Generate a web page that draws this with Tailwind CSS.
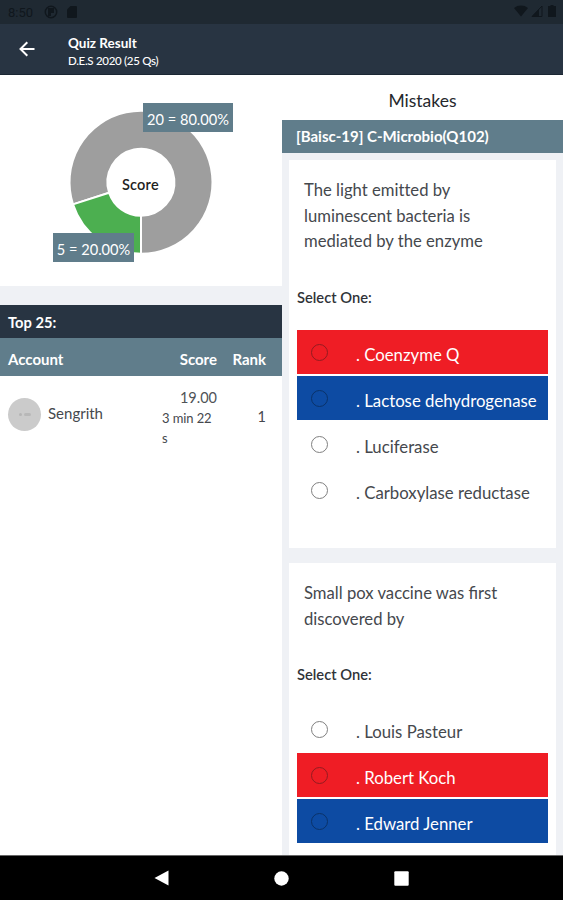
<!DOCTYPE html>
<html lang="en">
<head>
    <meta charset="UTF-8">
    <meta name="viewport" content="width=device-width, initial-scale=1.0">
    <title>Quiz Result</title>
    <script src="https://cdn.jsdelivr.net/npm/@tailwindcss/browser@4"></script>
</head>
<body class="h-[900px] w-[563px] overflow-hidden flex flex-col bg-[#eff1f5] font-[Lato,sans-serif] text-[#45484d]">
    <!-- Status Bar -->
    <div class="h-6 shrink-0 bg-[#1f2932] flex items-center pl-2 pr-[7px] text-[#10171d]">
        <span class="w-[27px] text-[13px] font-[Roboto,sans-serif] leading-none">8:50</span>
        <svg class="w-3.5 h-3.5 ml-[9px]" viewBox="0 0 14 14">
            <circle cx="7" cy="7" r="5.7" fill="none" stroke="currentColor" stroke-width="1.5"/>
            <path d="M4 3h6v5H7v3H4z" fill="currentColor"/>
        </svg>
        <svg class="w-3 h-3.5 ml-2" viewBox="0 0 12 14" fill="currentColor">
            <path d="M4.500 1H10a1 1 0 0 1 1 1v10a1 1 0 0 1-1 1H2a1 1 0 0 1-1-1V4.500z"/>
        </svg>
        <svg class="w-3.5 h-3 ml-auto -mt-0.5" viewBox="0 0 14 12" fill="currentColor">
            <path d="M0 3C4-.3 10-.3 14 3L7 11.500z"/>
        </svg>
        <svg class="w-3 h-3 ml-[3px] -mt-0.5" viewBox="0 0 12 12">
            <path d="M1 11.500L11 1v10.500z" fill="none" stroke="currentColor"/>
            <path d="M1 11.500L8 4.200v7.300z" fill="currentColor"/>
        </svg>
        <svg class="w-2 h-3 ml-[5px] -mt-0.5" viewBox="0 0 8 12" fill="currentColor">
            <path d="M2.500 0h3v1H8v11H0V1h2.500z"/>
        </svg>
    </div>

    <!-- App Bar -->
    <header class="h-[51px] shrink-0 bg-[#283442] border-b border-[#1b2733] flex items-center text-white">
        <svg class="w-4 h-4 ml-[19px] -mt-px" viewBox="0 0 16 16" fill="none" stroke="currentColor" stroke-width="2">
            <path d="M15.500 8H2M8.300 1.200L1.500 8l6.800 6.800"/>
        </svg>
        <div class="ml-[33px] mt-1.5">
            <h1 class="text-[13.500px] leading-[18px] font-bold">Quiz Result</h1>
            <p class="text-[11.500px] leading-[18px] font-medium tracking-[-0.3px]">D.E.S 2020 (25 Qs)</p>
        </div>
    </header>

    <main class="flex flex-1 min-h-0">
        <!-- Left Column: Score and Ranking -->
        <section class="w-[282px] shrink-0 flex flex-col">
            <div class="relative h-[211px] shrink-0 bg-white">
                <svg class="w-[282px] h-[211px]" viewBox="0 0 282 211">
                    <g transform="translate(141 107.300)" stroke="#fff" stroke-width="2">
                        <path fill="#9e9e9e" d="M0 71.500A71.500 71.500 0 1 0-68 22.100L-31.900 10.400A33.500 33.500 0 1 1 0 33.500z"/>
                        <path fill="#4caf50" d="M0 71.500A71.500 71.500 0 0 1-68 22.100L-31.900 10.400A33.500 33.500 0 0 0 0 33.500z"/>
                    </g>
                </svg>
                <span class="absolute left-[122px] top-[101px] text-[14.500px] leading-[18px] font-semibold tracking-[0.2px] text-[#222]">Score</span>
                <span class="absolute left-[143px] top-[28px] w-[90px] h-[29px] pt-[3px] text-center text-[14.600px] leading-7 text-white bg-[#607d8b]">20 = 80.00%</span>
                <span class="absolute left-[53px] top-[158px] w-[81px] h-[29px] pt-[3px] text-center text-[14.600px] leading-7 text-white bg-[#607d8b]">5 = 20.00%</span>
            </div>
            <div class="mt-[19px] h-[33px] shrink-0 bg-[#283442] pl-2 pt-0.5 text-[14.700px] leading-[31px] font-bold text-white">Top 25:</div>
            <div class="h-[38px] shrink-0 bg-[#607d8b] pt-[3px] flex text-[15px] leading-9 font-bold text-white">
                <span class="pl-2">Account</span>
                <span class="ml-auto">Score</span>
                <span class="w-[49px] mr-[16px] text-right">Rank</span>
            </div>
            <div class="flex-1 bg-white">
                <div class="flex items-center h-[76px] pl-2">
                    <span class="w-[33px] h-[33px] rounded-full bg-[#cbcbcb] flex items-center justify-center gap-0.5">
                        <i class="w-[3px] h-[3px] rounded-full bg-[#b5b5b5]"></i>
                        <i class="w-[7px] h-[3px] rounded-full bg-[#b8b8b8]"></i>
                    </span>
                    <span class="ml-[7px] -mt-0.5 text-[15px]">Sengrith</span>
                    <div class="ml-auto w-[55px] mt-2 leading-5">
                        <div class="text-right text-[14.500px] text-[#505357]">19.00</div>
                        <div class="w-[53px] text-[13px] tracking-[-0.1px]">3 min 22 s</div>
                    </div>
                    <span class="w-[49px] mr-[16px] mt-1.5 text-right text-[14.500px]">1</span>
                </div>
            </div>
        </section>

        <!-- Right Column: Mistakes -->
        <section class="flex-1 flex flex-col">
            <h2 class="h-[45px] shrink-0 bg-white pt-1 text-center text-[17.500px] leading-[43px] text-[#25282c]">Mistakes</h2>
            <div class="h-[33px] shrink-0 bg-[#607d8b] pl-[14px] text-[15px] leading-[33px] font-bold text-white">[Baisc-19] C-Microbio(Q102)</div>

            <article class="mt-[7px] ml-[7px] w-[267px] h-[388px] shrink-0 bg-white px-2 pt-[18px]">
                <p class="pl-[7px] text-[16.650px] leading-[25.500px]">The light emit&zwnj;ted by<br>luminescent bacteria is<br>mediated by the enzyme</p>
                <h3 class="mt-[29px] h-[26px] leading-[26px] text-[14.700px] font-semibold text-[#303338]">Select One:</h3>
                <ul class="mt-[20.500px] text-[16.750px]">
                    <li class="h-[44px] mb-[2px] flex items-center bg-[#ef1d25] text-white">
                        <i class="w-[17px] h-[17px] ml-[14px] rounded-full border-[1.500px] border-[#941b20]"></i>
                        <span class="ml-7 pt-1.5">. Coenzyme Q</span>
                    </li>
                    <li class="h-[44px] mb-[2px] flex items-center bg-[#0d4ba3] text-white">
                        <i class="w-[17px] h-[17px] ml-[14px] rounded-full border-[1.500px] border-[#0a3269]"></i>
                        <span class="ml-7 pt-1.5">. Lactose dehydrogenase</span>
                    </li>
                    <li class="h-[44px] mb-[2px] flex items-center">
                        <i class="w-[17px] h-[17px] ml-[14px] rounded-full border-[1.500px] border-[#808080]"></i>
                        <span class="ml-7 pt-1.5">. Luciferase</span>
                    </li>
                    <li class="h-[44px] flex items-center">
                        <i class="w-[17px] h-[17px] ml-[14px] rounded-full border-[1.500px] border-[#808080]"></i>
                        <span class="ml-7 pt-1.5">. Carboxylase reductase</span>
                    </li>
                </ul>
            </article>

            <article class="mt-[15px] ml-[7px] w-[267px] flex-1 bg-white px-2 pt-[18px]">
                <p class="pl-[7px] text-[16.650px] leading-[25.500px]">Small pox vaccine was first<br>discovered by</p>
                <h3 class="mt-[29px] h-[26px] leading-[26px] text-[14.700px] font-semibold text-[#303338]">Select One:</h3>
                <ul class="mt-5 text-[16.750px]">
                    <li class="h-[44px] mb-[2px] flex items-center">
                        <i class="w-[17px] h-[17px] ml-[14px] rounded-full border-[1.500px] border-[#808080]"></i>
                        <span class="ml-7 pt-1.5">. Louis Pasteur</span>
                    </li>
                    <li class="h-[44px] mb-[2px] flex items-center bg-[#ef1d25] text-white">
                        <i class="w-[17px] h-[17px] ml-[14px] rounded-full border-[1.500px] border-[#941b20]"></i>
                        <span class="ml-7 pt-1.5">. Robert Koch</span>
                    </li>
                    <li class="h-[44px] flex items-center bg-[#0d4ba3] text-white">
                        <i class="w-[17px] h-[17px] ml-[14px] rounded-full border-[1.500px] border-[#0a3269]"></i>
                        <span class="ml-7 pt-1.5">. Edward Jenner</span>
                    </li>
                </ul>
            </article>
        </section>
    </main>

    <!-- Navigation Bar -->
    <nav class="h-[45px] shrink-0 bg-black border-t border-[#666] flex items-center pl-[154px] gap-[105px] text-white">
        <svg class="w-[15px] h-4" viewBox="0 0 15 16" fill="currentColor"><path d="M14.500 .5v15L.5 8z"/></svg>
        <svg class="w-[15px] h-[15px]" viewBox="0 0 15 15" fill="currentColor"><circle cx="7.500" cy="7.500" r="7.200"/></svg>
        <svg class="w-[15px] h-[15px]" viewBox="0 0 15 15" fill="currentColor"><rect x=".3" y=".3" width="14.400" height="14.400" rx="1"/></svg>
    </nav>
</body>
</html>
